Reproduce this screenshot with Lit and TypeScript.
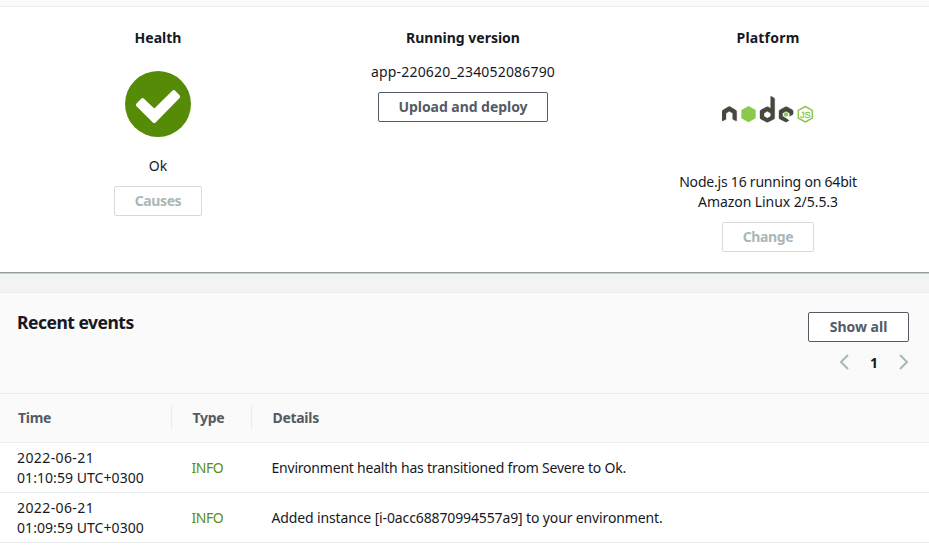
import { LitElement, html, css, svg } from "lit";
import { customElement, property } from "lit/decorators.js";

const nodeLogo = html`<svg width="93" height="27" viewBox="35 18 279 81" aria-label="node js">
  ${svg`
  <path d="M35 91V65Q35 62 38 60L54 50.500Q57 49 60 50.500L76 60Q79 62 79 65V91Q79 94 76 92.500L67 88V70L57 64L47 70V88L38 92.500Q35 94 35 91Z" fill="#46483e" stroke="#46483e"/>
  <path d="M114.500 48L136 60V85L114.500 97L93 85V60Z" fill="#8cc84b"/>
  <path transform="translate(6 0)" fill-rule="evenodd" d="M175 20Q175 18 177 19L184 23Q187 24 187 27V83Q187 86 184.500 87.500L168 96Q165 97.500 162 96L146 87.500Q143 86 143 83V64Q143 61 146 59.500L162 51Q165 49.500 168 51L175 55ZM165 64L155 70V79L165 84.500L175 79V70Z" fill="#46483e" stroke="#46483e"/>
  <path transform="translate(14 0)" d="M213 50Q215 50 217 51L232 59.500Q234.500 61 234.500 64V71Q234.500 73 232 74.500L224 79V70L213 64L203 70V79L213 84.500L221 90Q222.500 91 221 92L216 95Q213 97 210 95L195 87.500Q192 86 192 83V64Q192 61 195 59.500L210 51Q211.500 50 213 50Z" fill="#46483e" stroke="#46483e"/>
  <path transform="translate(14 0)" d="M213 67L219 70.500V77L213 80L207 77V70.500Z" fill="#8cc84b"/>
  <path d="M285 49.500L306 61V84.500L285 96L264 84.500V61Z" fill="#fff" stroke="#8cc84b" stroke-width="4.500" stroke-linejoin="round"/>
  <text x="285" y="83" text-anchor="middle" fill="#8cc84b" stroke="#8cc84b" stroke-width=".8" font-family="Liberation Sans, sans-serif" font-size="28">JS</text>`}
</svg>`;

const okIcon = html`<svg width="66" height="66" viewBox="0 0 66 66">
  <circle cx="33" cy="33" r="33" fill="#558b06"/>
  <path d="M11.500 32.500L16.200 27.700Q17.600 26.400 19 27.700L29.300 37.600L47.300 19.800Q48.800 18.400 50.200 19.800L54.600 24.300Q55.900 25.700 54.600 27.100L30.600 51.400Q29.200 52.700 27.800 51.400L11.500 35.300Q10.100 33.900 11.500 32.500Z" fill="#fff"/>
</svg>`;

const chevron = (d: string) => html`<svg width="10" height="16" viewBox="0 0 10 16">
  <path d=${d} fill="none" stroke="#aab7b8" stroke-width="2"/></svg>`;

@customElement("app-button")
export class AppButton extends LitElement {
  @property({ type: Boolean, reflect: true }) disabled = false;
  static styles = css`
    :host { display: inline-flex; }
    button {
      width: 100%; height: 30px; padding: 0; box-sizing: border-box;
      font: inherit; font-weight: 700; line-height: 20px; letter-spacing: inherit;
      color: #545b64; background: #fff; border: 1px solid #545b64; border-radius: 2px;
      white-space: nowrap;
    }
    button:disabled { color: #aab7b8; border-color: #d5dbdb; }
  `;
  render() {
    return html`<button ?disabled=${this.disabled}><slot></slot></button>`;
  }
}

const events = [
  { date: "2022-06-21", time: "01:10:59 UTC+0300", type: "INFO", cls: "d1", details: "Environment health has transitioned from Severe to Ok." },
  { date: "2022-06-21", time: "01:09:59 UTC+0300", type: "INFO", cls: "d2", details: "Added instance [i-0acc68870994557a9] to your environment." },
];

@customElement("app-root")
export class AppRoot extends LitElement {
  static styles = css`
    :host {
      display: block; height: 552px; overflow: hidden; background: #fff; color: #16191f;
      font: 14px/20px "Noto Sans", "Open Sans", sans-serif; white-space: nowrap;
    }
    .strip { height: 6px; background: #fafafa; border-bottom: 1px solid #eaeded; }
    .overview {
      display: grid; grid-template-columns: repeat(3, 305px); padding: 21px 0 0 5.5px;
      height: 266px; box-sizing: border-box; border-bottom: 1px solid #919d9e;
    }
    .col { display: flex; flex-direction: column; align-items: center; text-align: center; }
    h3 { margin: 0; font-size: 14px; line-height: 20px; font-weight: 700; }
    .health svg { margin: 23px 0 19px; }
    .health app-button { margin-top: 10px; width: 88px; letter-spacing: -0.4px; }
    .version p { margin: 14px 0 10px; letter-spacing: 0.18px; }
    .version app-button { width: 170px; letter-spacing: -0.05px; }
    .platform h3 { letter-spacing: 0.2px; }
    .platform svg { margin: 48px 0 49px; }
    .platform app-button { margin-top: 10px; width: 92px; letter-spacing: -0.35px; }
    p { margin: 0; }
    .p1 { letter-spacing: -0.21px; }
    .p2 { letter-spacing: -0.07px; }
    .gap { height: 19px; box-sizing: border-box; background: #f2f3f3; border-top: 1px solid #c9d0d0; }
    .head {
      display: flex; justify-content: space-between; box-sizing: border-box; height: 102px;
      padding: 19px 20px 0 17px; background: #fafafa;
      border-top: 1px solid #eaeded; border-bottom: 1px solid #eaeded;
    }
    h2 { margin: 0; font-size: 17.5px; line-height: 20px; font-weight: 700; letter-spacing: -0.5px; }
    .tools { display: flex; flex-direction: column; align-items: flex-end; }
    .tools app-button { width: 101px; }
    .pager { display: flex; align-items: center; margin-top: 10px; font-weight: 700; gap: 21px; }
    .pager span { margin: 1px 0 -1px; }
    .row { display: grid; grid-template-columns: 171px 80px 1fr; align-items: center; box-sizing: border-box; border-bottom: 1px solid #eaeded; }
    .th { height: 49px; background: #fafafa; color: #545b64; font-weight: 700; letter-spacing: -0.3px; }
    .th div { height: 24px; line-height: 24px; padding-left: 20.500px; border-left: 1px solid #eaeded; }
    .th div:first-child { padding-left: 18px; border: 0; }
    .td { height: 50px; }
    .td div { padding-left: 20.500px; }
    .td div:first-child { padding-left: 17px; }
    .date { letter-spacing: 0.4px; }
    .time { letter-spacing: 0.06px; }
    .td .type { color: #5a8d0d; letter-spacing: -0.5px; }
    .d1 { letter-spacing: -0.21px; }
    .d2 { letter-spacing: -0.13px; }
  `;
  render() {
    return html`
      <div class="strip"></div>
      <section class="overview">
        <div class="col health">
          <h3>Health</h3>
          ${okIcon}
          <p>Ok</p>
          <app-button disabled>Causes</app-button>
        </div>
        <div class="col version">
          <h3>Running version</h3>
          <p>app-220620_234052086790</p>
          <app-button>Upload and deploy</app-button>
        </div>
        <div class="col platform">
          <h3>Platform</h3>
          ${nodeLogo}
          <p class="p1">Node.js 16 running on 64bit</p>
          <p class="p2">Amazon Linux 2/5.5.3</p>
          <app-button disabled>Change</app-button>
        </div>
      </section>
      <div class="gap"></div>
      <header class="head">
        <h2>Recent events</h2>
        <div class="tools">
          <app-button>Show all</app-button>
          <div class="pager">${chevron("M9 1L2 8L9 15")}<span>1</span>${chevron("M1 1L8 8L1 15")}</div>
        </div>
      </header>
      <div class="row th"><div>Time</div><div>Type</div><div>Details</div></div>
      ${events.map((e) => html`<div class="row td">
        <div><span class="date">${e.date}</span><br /><span class="time">${e.time}</span></div>
        <div class="type">${e.type}</div>
        <div class=${e.cls}>${e.details}</div>
      </div>`)}
    `;
  }
}
